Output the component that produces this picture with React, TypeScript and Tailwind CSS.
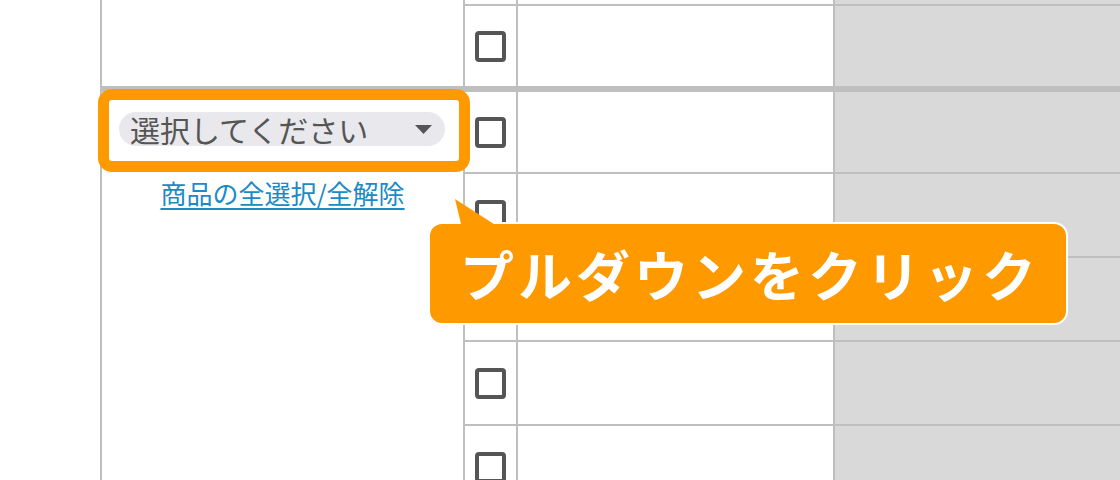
import React from 'react';

const LINE = 'border-[#bfbfbf]';

function Checkbox() {
  return <div className="h-[31px] w-[31px] rounded-[4px] border-[4px] border-[#555]" />;
}

interface RowProps {
  height: string;
  bordered?: boolean;
}

function Row({ height, bordered = true }: RowProps) {
  return (
    <div className={`flex ${height} ${bordered ? `border-b-2 ${LINE}` : ''}`}>
      <div className={`flex w-[53px] items-center justify-center border-r-2 ${LINE}`}>
        <Checkbox />
      </div>
      <div className={`w-[317px] border-r-2 ${LINE}`} />
      <div className="flex-1 bg-[#d9d9d9]" />
    </div>
  );
}

function SelectBox() {
  return (
    <div className="relative z-10 flex h-[34px] w-[326px] items-center justify-between rounded-full bg-[#e9e9ed] pl-[11px] pr-[13px]">
      <span className="text-[30px] leading-none text-[#555]">選択してください</span>
      <svg width="17" height="9" viewBox="0 0 17 9">
        <polygon points="0,0 17,0 8.5,9" fill="#555" />
      </svg>
    </div>
  );
}

export default function App() {
  return (
    <div className="relative h-[480px] w-[1120px] overflow-hidden bg-white font-['Noto_Sans_CJK_JP',sans-serif]">
      <div className="-mt-[78px] ml-[100px] flex flex-col">
        {/* previous product group (scrolled) */}
        <div className={`flex border-b-[6px] ${LINE}`}>
          <div className={`w-[365px] border-x-2 ${LINE}`} />
          <div className="flex flex-1 flex-col">
            <Row height="h-[84px]" />
            <Row height="h-[80px]" bordered={false} />
          </div>
        </div>

        {/* current group */}
        <div className="flex">
          <div className={`relative w-[365px] border-x-2 ${LINE} pl-[17px] pt-[20px]`}>
            <div className="absolute -left-[4px] -top-[3px] h-[83px] w-[372px] rounded-[14px] border-[11px] border-[#ff9900] bg-white" />
            <SelectBox />
            <div className="mt-[29px] -ml-[17px] text-center">
              <a
                href="#"
                className="text-[26px] leading-[36px] text-[#1b8ac5] underline decoration-[1.5px] underline-offset-[4px]"
              >
                商品の全選択/全解除
              </a>
            </div>
          </div>
          <div className="flex flex-1 flex-col">
            <Row height="h-[82px]" />
            <Row height="h-[84px]" />
            <Row height="h-[84px]" />
            <Row height="h-[84px]" />
            <Row height="h-[84px]" />
          </div>
        </div>
      </div>

      {/* callout */}
      <div className="absolute left-[428px] top-[222px] flex h-[103px] w-[640px] items-center justify-center rounded-[14px] border-2 border-white bg-[#ff9900]">
        <svg className="absolute -top-[27px] left-[20px]" width="52" height="32" viewBox="0 0 52 32">
          <polygon points="5,2 12,31 50,31" fill="#ff9900" />
        </svg>
        <span className="pl-[4px] text-[54px] font-bold leading-none tracking-[4px] text-white">プルダウンをクリック</span>
      </div>
    </div>
  );
}
